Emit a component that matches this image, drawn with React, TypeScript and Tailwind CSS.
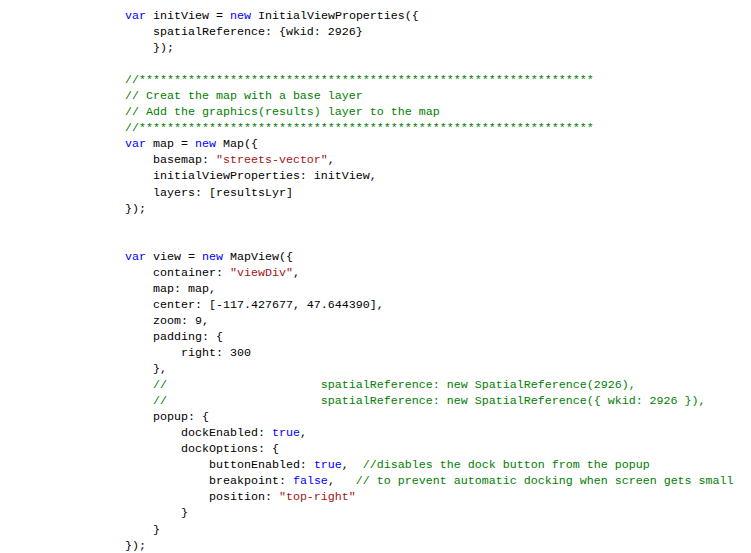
import React from "react";

type Tok = [string, string?];

const K = "text-[#0000ff]";
const S = "text-[#a31515]";
const C = "text-[#008000]";

const stars = "//" + "*".repeat(65);

const lines: Tok[][] = [
  [[ "var", K ], [" initView = "], ["new", K], [" InitialViewProperties({"]],
  [["    spatialReference: {wkid: 2926}"]],
  [["    });"]],
  [],
  [[stars, C]],
  [["// Creat the map with a base layer", C]],
  [["// Add the graphics(results) layer to the map", C]],
  [[stars, C]],
  [["var", K], [" map = "], ["new", K], [" Map({"]],
  [["    basemap: "], ['"streets-vector"', S], [","]],
  [["    initialViewProperties: initView,"]],
  [["    layers: [resultsLyr]"]],
  [["});"]],
  [],
  [],
  [["var", K], [" view = "], ["new", K], [" MapView({"]],
  [["    container: "], ['"viewDiv"', S], [","]],
  [["    map: map,"]],
  [["    center: [-117.427677, 47.644390],"]],
  [["    zoom: 9,"]],
  [["    padding: {"]],
  [["        right: 300"]],
  [["    },"]],
  [["    //                      spatialReference: new SpatialReference(2926),", C]],
  [["    //                      spatialReference: new SpatialReference({ wkid: 2926 }),", C]],
  [["    popup: {"]],
  [["        dockEnabled: "], ["true", K], [","]],
  [["        dockOptions: {"]],
  [["            buttonEnabled: "], ["true", K], [",  "], ["//disables the dock button from the popup", C]],
  [["            breakpoint: "], ["false", K], [",   "], ["// to prevent automatic docking when screen gets small", C]],
  [["            position: "], ['"top-right"', S]],
  [["        }"]],
  [["    }"]],
  [["});"]],
];

export default function App() {
  return (
    <div className="w-[751px] h-[553px] bg-white overflow-hidden pt-[8px] pl-[125px]">
      <div className="font-['Liberation_Mono',monospace] text-[11.67px] leading-[16.06px] text-black">
        {lines.map((l, i) => (
          <div key={i} className="h-[16.06px] whitespace-pre">
            {l.map(([t, c], j) => (
              <span key={j} className={c}>
                {t}
              </span>
            ))}
          </div>
        ))}
      </div>
    </div>
  );
}
